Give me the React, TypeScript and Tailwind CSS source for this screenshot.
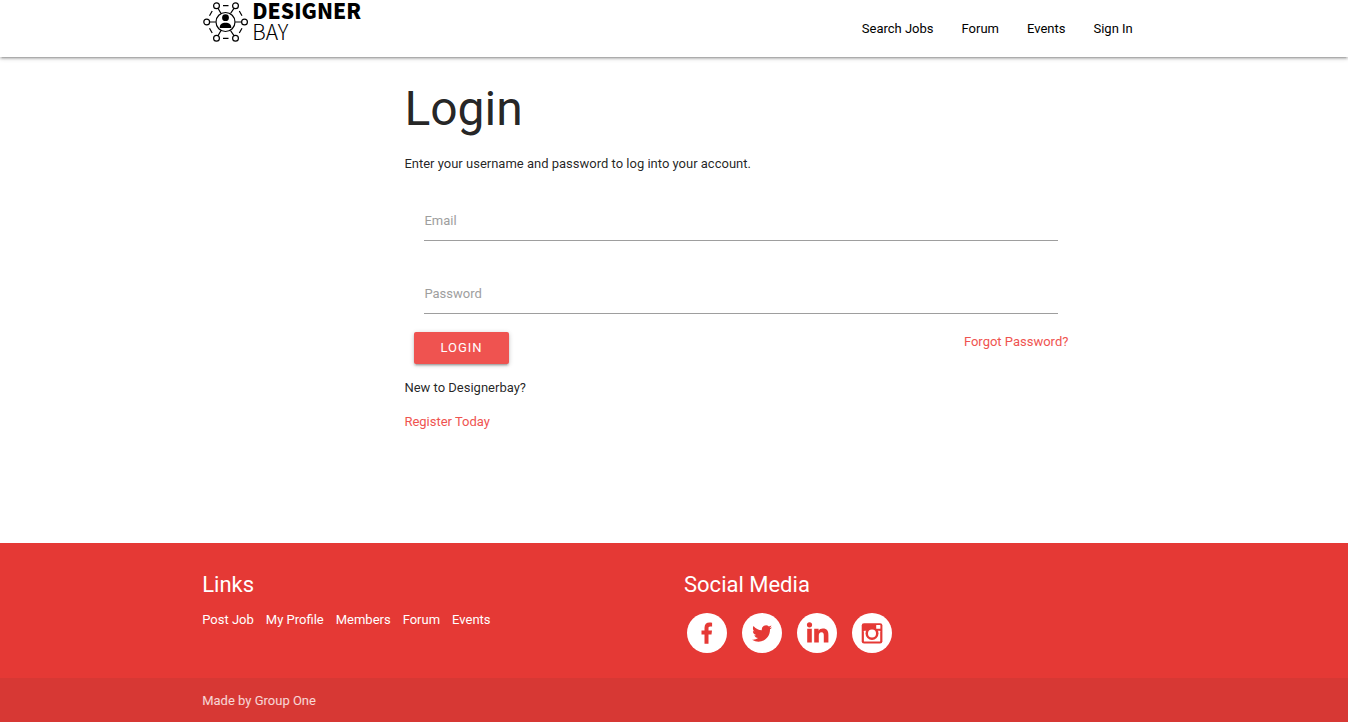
import type { ReactNode } from "react";

const logoNodes = [
  [14.5, 5.7],
  [33.5, 5.7],
  [42.5, 22],
  [33.5, 38.3],
  [14.5, 38.3],
  [4.7, 22],
];

function Logo() {
  return (
    <a href="#home" aria-label="Designer Bay" className="flex items-start text-black">
      <svg viewBox="0 0 48 44" className="h-11 w-12" fill="none" stroke="currentColor" strokeWidth="1.2">
        <path d="M16 8.300 19 13.500M32 8.300 28.500 13.500M39.500 22h-6.300M32 35.700 28.500 30.500M16 35.700 19 30.500M7.700 22h6" />
        <path d="M21 5.700h5.500M21 38.300h5.500M37.300 11l2.700 4.800M37.300 33l2.700-4.800M10.200 11l-2.700 4.800M10.200 33l-2.700-4.800" />
        <circle cx="23.500" cy="22" r="9.500" />
        {logoNodes.map(([x, y]) => (
          <circle key={`${x}-${y}`} cx={x} cy={y} r="2.900" fill="white" />
        ))}
        <circle cx="23.500" cy="17.700" r="3.400" fill="currentColor" stroke="none" />
        <path d="M17.700 28c0-3.800 2-5.300 5.800-5.300s5.800 1.500 5.800 5.300z" fill="currentColor" stroke="none" />
      </svg>
      <span className="flex flex-col pl-0.5 font-['Noto_Sans_CJK_JP','Noto_Sans',sans-serif] text-[21px] leading-[21px]">
        <span className="font-black">DESIGNER</span>
        <span className="font-light">BAY</span>
      </span>
    </a>
  );
}

function Field({ id, label, type }: { id: string; label: string; type: string }) {
  return (
    <div className="grid px-5">
      <input
        id={id}
        type={type}
        placeholder=" "
        className="peer col-start-1 row-start-1 h-10 w-full border-b border-[#9e9e9e] bg-transparent outline-none focus:border-[#ef5350]"
      />
      <label
        htmlFor={id}
        className="invisible col-start-1 row-start-1 cursor-text self-center justify-self-start text-[#9e9e9e] peer-placeholder-shown:visible peer-focus:invisible"
      >
        {label}
      </label>
    </div>
  );
}

function Social({ label, children }: { label: string; children: ReactNode }) {
  return (
    <a href={`#${label.toLowerCase()}`} aria-label={label}>
      <svg viewBox="0 0 40 40" className="size-10">
        <circle cx="20" cy="20" r="20" fill="white" />
        <g fill="#e53935">{children}</g>
      </svg>
    </a>
  );
}

export default function App() {
  return (
    <div className="flex min-h-screen flex-col bg-white font-[Roboto,sans-serif] text-[13px] leading-5 text-black/87">
      <header className="h-[57px] shadow-[0_2px_2px_0_rgba(0,0,0,0.14),0_3px_1px_-2px_rgba(0,0,0,0.12),0_1px_5px_0_rgba(0,0,0,0.2)]">
        <div className="mx-auto flex w-[70%] justify-between">
          <Logo />
          <nav className="flex gap-7 px-[13px] pt-[19px] text-black">
            <a href="#jobs">Search Jobs</a>
            <a href="#forum">Forum</a>
            <a href="#events">Events</a>
            <a href="#signin">Sign In</a>
          </nav>
        </div>
      </header>

      <main className="ml-[30%] w-1/2 grow pt-[25px]">
        <h1 className="text-[48px] leading-[54px]">Login</h1>
        <p className="pt-[18px]">Enter your username and password to log into your account.</p>
        <form className="pt-[27px]" onSubmit={(e) => e.preventDefault()}>
          <div className="flex flex-col gap-[33px]">
            <Field id="email" label="Email" type="email" />
            <Field id="password" label="Password" type="password" />
          </div>
          <div className="flex items-start justify-between px-[10px] pt-[18px]">
            <button
              type="submit"
              className="h-8 rounded-xs bg-[#ef5350] px-[26px] tracking-[1px] text-white uppercase shadow-[0_2px_2px_0_rgba(0,0,0,0.14),0_3px_1px_-2px_rgba(0,0,0,0.12),0_1px_5px_0_rgba(0,0,0,0.2)]"
            >
              Login
            </button>
            <a href="#forgot" className="text-[#ef5350]">Forgot Password?</a>
          </div>
        </form>
        <p className="pt-[14px]">New to Designerbay?</p>
        <p className="pt-[14px]">
          <a href="#register" className="text-[#ef5350]">Register Today</a>
        </p>
      </main>

      <footer className="bg-[#e53935] text-white">
        <div className="mx-auto grid w-[70%] grid-cols-2 gap-5 pt-[26px] pb-[25px]">
          <section>
            <h2 className="text-[22px] leading-8">Links</h2>
            <ul className="flex flex-wrap gap-3 pt-[9px]">
              <li><a href="#post">Post Job</a></li>
              <li><a href="#profile">My Profile</a></li>
              <li><a href="#members">Members</a></li>
              <li><a href="#forum">Forum</a></li>
              <li><a href="#events">Events</a></li>
            </ul>
          </section>
          <section>
            <h2 className="text-[22px] leading-8">Social Media</h2>
            <div className="flex gap-[15px] pt-3 pl-[3px]">
              <Social label="Facebook">
                <path d="M17.500 30.700V21.600h-3v-4.100h3v-2.700c0-3.500 1.900-5.300 5-5.300 1.200 0 2.200.1 2.600.2v3.800h-1.800c-1.500 0-1.800.7-1.800 1.800v2.200h3.500l-.5 4.100h-3v9.100z" />
              </Social>
              <Social label="Twitter">
                <path d="M30 14.200c-.7.300-1.500.5-2.300.6.8-.5 1.500-1.300 1.800-2.200-.8.500-1.700.8-2.600 1a4.100 4.100 0 0 0-7 3.700c-3.400-.2-6.400-1.800-8.400-4.300-1.100 1.900-.6 4.300 1.200 5.500-.7 0-1.300-.2-1.800-.5 0 2 1.400 3.700 3.300 4.100-.6.200-1.200.2-1.900.1.500 1.600 2 2.800 3.800 2.800a8.200 8.200 0 0 1-6.100 1.700c8.200 5.100 18-.4 18-9.900v-.500c.8-.6 1.500-1.300 2-2.100z" />
              </Social>
              <Social label="LinkedIn">
                <path d="M10.200 15.800h4.600v13.700h-4.600zM17.200 15.800h4.400v1.900c.8-1.400 2.200-2.200 4.300-2.200 4.200 0 5.500 2.600 5.500 6.400v7.600h-4.600v-6.800c0-1.800-.3-3.400-2.300-3.400s-2.700 1.400-2.700 3.400v6.800h-4.600z" />
                <circle cx="12.500" cy="11.800" r="2.600" />
              </Social>
              <Social label="Instagram">
                <rect x="9.700" y="10.300" width="20.700" height="20.300" rx="2.300" />
                <rect x="11.900" y="17.700" width="16.300" height="10.800" rx=".6" fill="white" />
                <circle cx="20" cy="20.400" r="6.500" />
                <circle cx="20" cy="20.400" r="4" fill="white" />
                <rect x="24.200" y="11.900" width="4.200" height="3.900" rx=".5" fill="white" />
              </Social>
            </div>
          </section>
        </div>
        <div className="bg-[#333333]/8 pt-[13px] pb-[11px] text-white/80">
          <p className="mx-auto w-[70%]">Made by Group One</p>
        </div>
      </footer>
    </div>
  );
}
